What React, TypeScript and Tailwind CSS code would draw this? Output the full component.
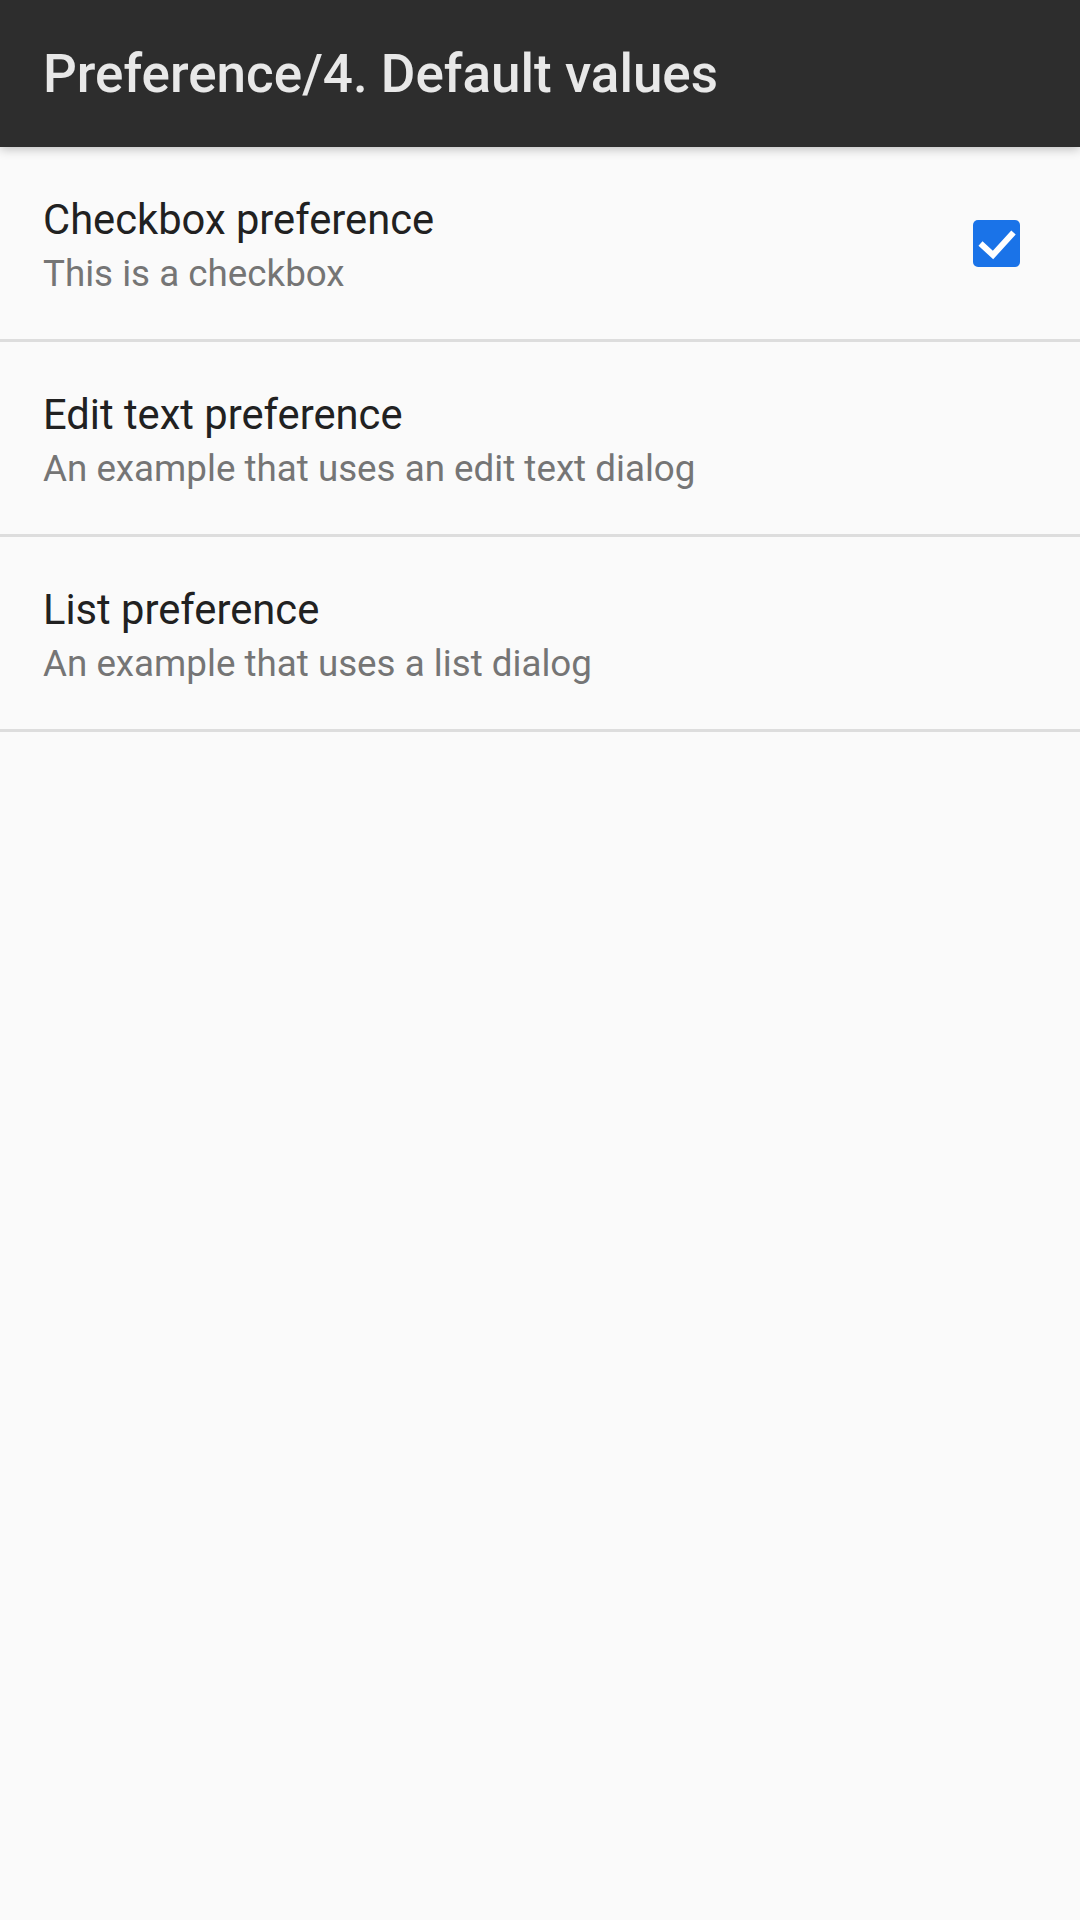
const prefs = [
  { title: "Checkbox preference", summary: "This is a checkbox", checkbox: true },
  { title: "Edit text preference", summary: "An example that uses an edit text dialog" },
  { title: "List preference", summary: "An example that uses a list dialog" },
];

function CheckBox() {
  return (
    <svg width="47" height="47" viewBox="0 0 47 47" className="shrink-0">
      <rect x="0" y="0" width="47" height="47" rx="5" fill="#1a73e8" />
      <path d="M7.5 23.5 L20 35 L40.5 12.5" fill="none" stroke="#ffffff" strokeWidth="6" />
    </svg>
  );
}

export default function App() {
  return (
    <div className="w-[1080px] h-[1920px] bg-[#fafafa] flex flex-col" style={{ fontFamily: "Roboto, 'Noto Sans', sans-serif" }}>
      <header className="relative h-[147px] shrink-0 bg-[#2d2d2d] flex items-center px-[43px] shadow-[0_2px_10px_rgba(0,0,0,0.25)] z-10">
        <h1 className="text-[#e8e8e8] text-[53px] font-medium leading-none pt-[2px]">Preference/4. Default values</h1>
      </header>
      <div className="flex flex-col">
        {prefs.map((p) => (
          <div key={p.title} className="flex flex-col">
            <div className="h-[192px] flex items-center pl-[43px] pr-[60px]">
              <div className="flex-1 flex flex-col pt-[9px]">
                <div className="text-[41.7px] leading-[52px] text-[#212121]">{p.title}</div>
                <div className="text-[36.75px] leading-[56px] text-[#757575]">{p.summary}</div>
              </div>
              {p.checkbox && <CheckBox />}
            </div>
            <div className="h-[3px] bg-[#dddddd]" />
          </div>
        ))}
      </div>
    </div>
  );
}
